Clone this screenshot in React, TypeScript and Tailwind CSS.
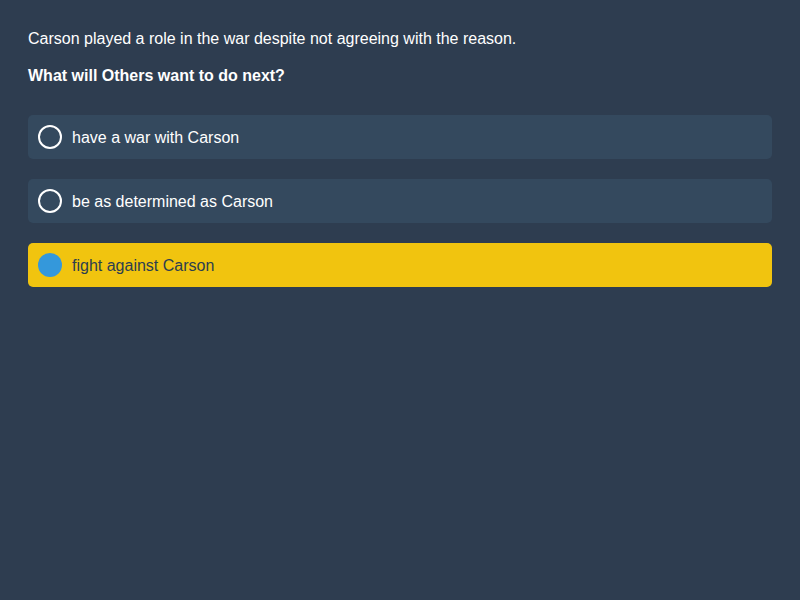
const options = [
  { label: "have a war with Carson", selected: false },
  { label: "be as determined as Carson", selected: false },
  { label: "fight against Carson", selected: true },
];

export default function App() {
  return (
    <div
      className="min-h-[600px] w-full bg-[#2e3d50] px-7 pt-[29px] text-white"
      style={{ fontFamily: '"Liberation Sans", Arial, sans-serif' }}
    >
      <p className="text-[16px] leading-[19px]">
        Carson played a role in the war despite not agreeing with the reason.
      </p>
      <p className="mt-[18px] text-[16px] font-bold leading-[19px]">What will Others want to do next?</p>
      <div className="mt-[30px] flex flex-col gap-5">
        {options.map((o) => (
          <div
            key={o.label}
            className={
              o.selected
                ? "flex h-11 items-center gap-[10px] rounded-[5px] bg-[#f1c40f] pl-[10px] text-[#2c3e50]"
                : "flex h-11 items-center gap-[10px] rounded-[5px] bg-[#34495e] pl-[10px] text-white"
            }
          >
            {o.selected ? (
              <span className="h-6 w-6 shrink-0 rounded-full bg-[#3498db]" />
            ) : (
              <span className="h-6 w-6 shrink-0 rounded-full border-2 border-white" />
            )}
            <span className="text-[16px] leading-[19px]">{o.label}</span>
          </div>
        ))}
      </div>
    </div>
  );
}
